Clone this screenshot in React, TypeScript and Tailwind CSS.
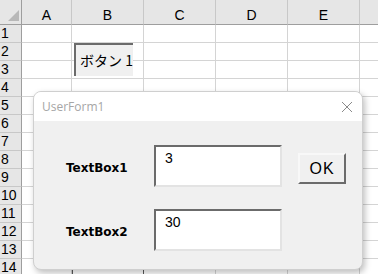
import React from "react";

const COLS: [string, string][] = [
  ["A", "w-[50px]"],
  ["B", "w-[72px]"],
  ["C", "w-[72px]"],
  ["D", "w-[72px]"],
  ["E", "w-[72px]"],
];

const ROWS = Array.from({ length: 14 }, (_, i) => i + 1);

function Sheet() {
  return (
    <div className="flex flex-col font-['Liberation_Sans','Noto_Sans_CJK_JP',sans-serif] text-[14px] text-black">
      <div className="flex h-[25px] bg-[#e6e6e6]">
        <div className="relative w-[22px] shrink-0 border-r border-b border-[#9e9e9e]">
          <div className="absolute right-[2px] bottom-[3px] h-0 w-0 border-l-[11px] border-t-[11px] border-l-transparent border-t-transparent border-r-0 border-b-[11px] border-b-[#b8b8b8]" />
        </div>
        {COLS.map(([c, w]) => (
          <div
            key={c}
            className={`${w} shrink-0 flex items-end justify-center pb-[2px] border-r border-r-[#c8c8c8] border-b border-b-[#9e9e9e] leading-none`}
          >
            {c}
          </div>
        ))}
        <div className="flex-1 border-b border-[#9e9e9e]" />
      </div>
      {ROWS.map((r) => (
        <div key={r} className="flex h-[18px]">
          <div className="w-[22px] shrink-0 bg-[#e6e6e6] border-r border-r-[#9e9e9e] border-b border-b-[#c8c8c8] pl-[1px] leading-[17px]">
            {r}
          </div>
          {COLS.map(([c, w]) => (
            <div key={c} className={`${w} shrink-0 bg-white border-r border-b border-[#d4d4d4]`} />
          ))}
          <div className="flex-1 bg-white border-b border-[#d4d4d4]" />
        </div>
      ))}
    </div>
  );
}

function TextBox({ value }: { value: string }) {
  return (
    <div className="h-[42px] w-[128px] bg-white border-2 border-t-[#6b6b6b] border-l-[#6b6b6b] border-r-[#e3e3e3] border-b-[#e3e3e3] pl-[9px] pt-[3px] text-[14px] leading-[16px] font-normal font-['Liberation_Sans','Noto_Sans_CJK_JP',sans-serif]">
      {value}
    </div>
  );
}

function UserForm() {
  return (
    <div className="absolute left-[33px] top-[91px] w-[330px] h-[179px] overflow-hidden rounded-[8px] border border-[#cfcfcf] bg-[#f0f0f0] shadow-[2px_3px_6px_rgba(0,0,0,0.25)]">
      <div className="flex h-[29px] items-center justify-between bg-white pl-[8px] pr-[8px]">
        <span className="font-['Open_Sans',sans-serif] text-[12px] text-[#a6a6a6]">UserForm1</span>
        <svg width="12" height="12" viewBox="0 0 12 12" className="mr-[1px]">
          <path d="M1 1 L11 11 M11 1 L1 11" stroke="#8a8a8a" strokeWidth="1" fill="none" />
        </svg>
      </div>
      <div className="grid grid-cols-[72px_128px_48px] gap-x-4 gap-y-[22px] pl-[32px] pt-[24px] font-['DejaVu_Sans',sans-serif] text-[12px] font-bold">
        <div className="flex items-center pt-[4px]">TextBox1</div>
        <TextBox value="3" />
        <div className="pt-[8px]">
          <div className="flex h-[31px] w-[48px] items-center justify-center border-2 border-t-[#f8f8f8] border-l-[#f8f8f8] border-r-[#6b6b6b] border-b-[#6b6b6b] bg-[#f0f0f0] font-['Liberation_Sans',sans-serif] text-[16px] font-medium tracking-[1px]">
            OK
          </div>
        </div>
        <div className="flex items-center pt-[4px]">TextBox2</div>
        <TextBox value="30" />
      </div>
    </div>
  );
}

export default function App() {
  return (
    <div className="relative h-[274px] w-[378px] overflow-hidden bg-white">
      <Sheet />
      <div className="absolute left-[74px] top-[43px] flex h-[33px] w-[59px] items-center border-2 border-t-[#6b6b6b] border-l-[#6b6b6b] border-r-0 border-b-0 bg-[#f0f0f0] pl-[4px] font-['Noto_Sans_CJK_JP',sans-serif] text-[14px]">
        ボタン 1
      </div>
      <div className="absolute left-[72px] top-[266px] h-[10px] w-[72px] border-x border-[#5a5a5a] bg-white" />
      <UserForm />
    </div>
  );
}
